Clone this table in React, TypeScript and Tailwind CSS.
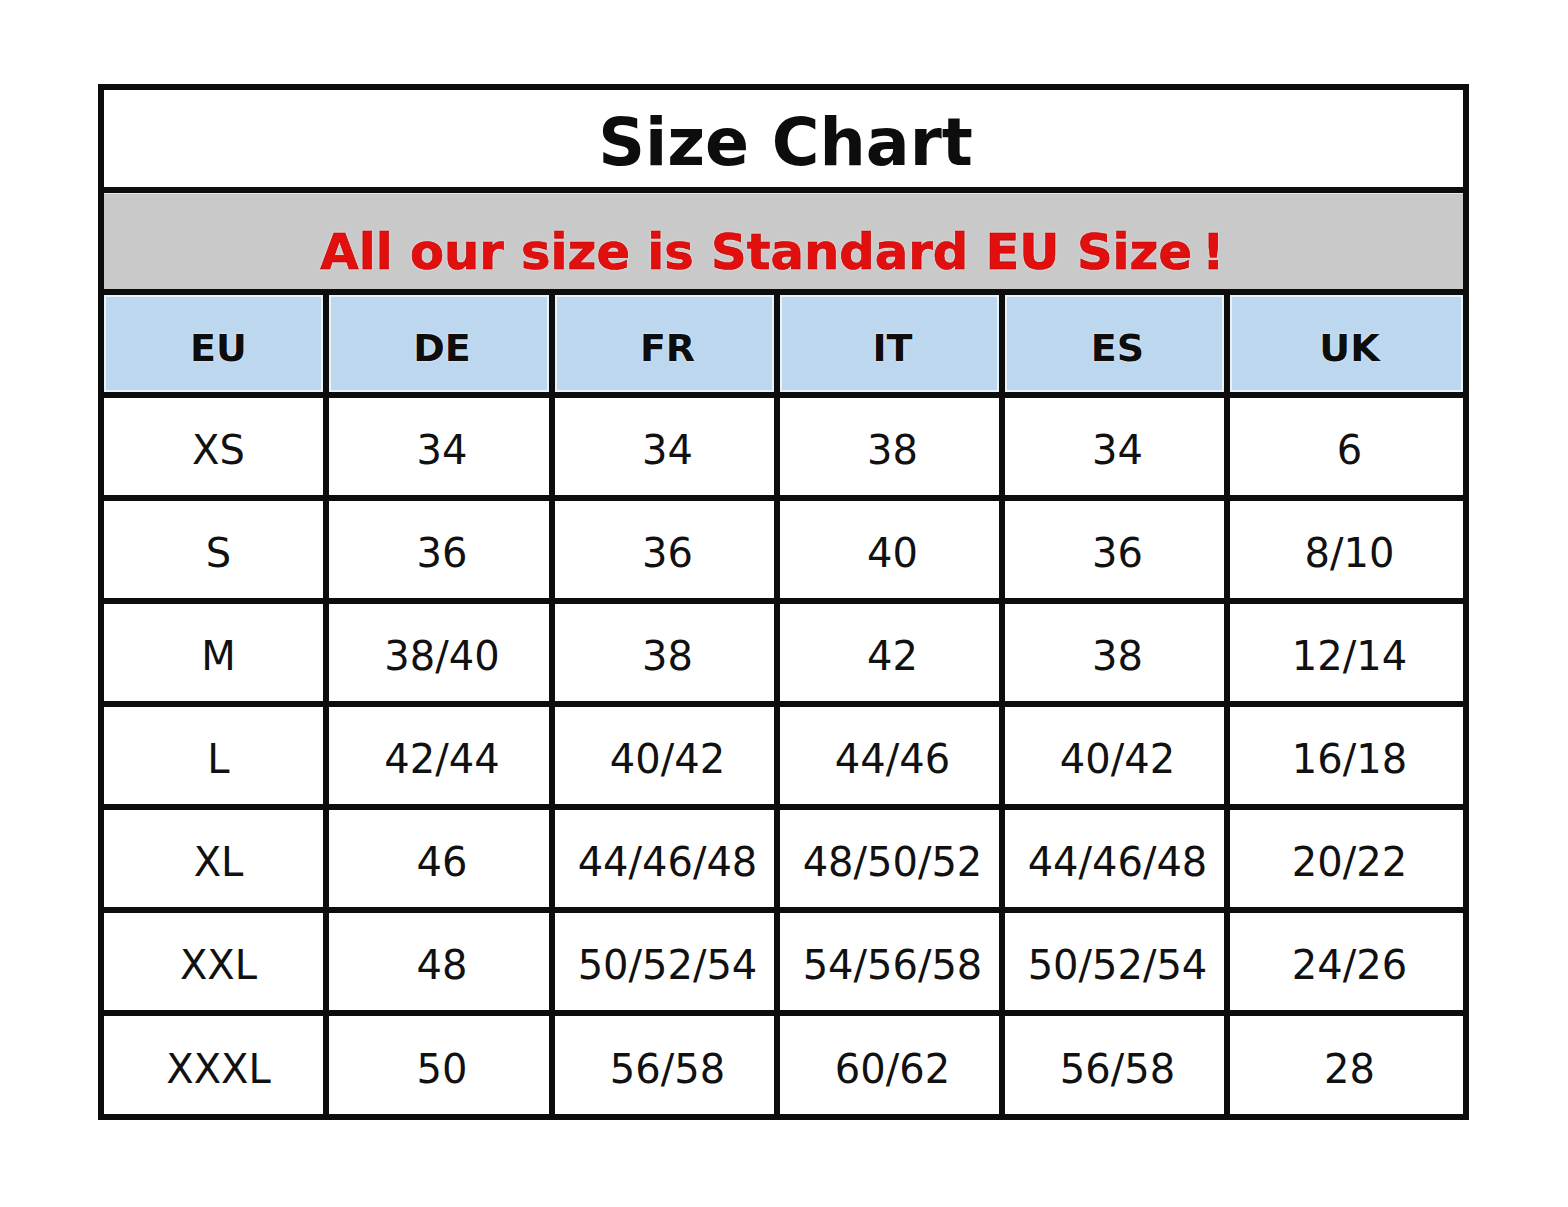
import React from 'react';

const headers = ['EU', 'DE', 'FR', 'IT', 'ES', 'UK'];

const rows: string[][] = [
  ['XS', '34', '34', '38', '34', '6'],
  ['S', '36', '36', '40', '36', '8/10'],
  ['M', '38/40', '38', '42', '38', '12/14'],
  ['L', '42/44', '40/42', '44/46', '40/42', '16/18'],
  ['XL', '46', '44/46/48', '48/50/52', '44/46/48', '20/22'],
  ['XXL', '48', '50/52/54', '54/56/58', '50/52/54', '24/26'],
  ['XXXL', '50', '56/58', '60/62', '56/58', '28'],
];

const cols = 'grid grid-cols-[225px_226px_225px_225px_225px_1fr]';

export default function App() {
  return (
    <div className="w-[1568px] h-[1207px] bg-white pt-[84px] pl-[98px] font-['DejaVu_Sans',Verdana,sans-serif]">
      <div className="w-[1371px] border-[6px] border-[#0d0d0d] bg-white">
        {/* Title */}
        <div className="h-[103px] border-b-[6px] border-[#0d0d0d] flex items-center justify-center pt-[8px]">
          <span className="text-[65px] font-bold text-[#0d0d0d] leading-none pl-[4px]">Size Chart</span>
        </div>

        {/* Notice */}
        <div className="h-[102px] border-b-[6px] border-[#0d0d0d] bg-[#c9c9c9] border-t border-t-[#e6e6e6] flex items-center justify-center pt-[22px] pr-[22px]">
          <span className="text-[49.6px] font-bold leading-none text-[#e1100e] [-webkit-text-stroke:0.6px_#b30000] [text-shadow:0_0_2px_#ffd6d6,0_0_3px_#ffd6d6]">
            All our size is Standard EU Size<span className="ml-[10px]">!</span>
          </span>
        </div>

        {/* Column headers */}
        <div className={`${cols} h-[103px] border-b-[6px] border-[#0d0d0d]`}>
          {headers.map((h, i) => (
            <div
              key={h}
              className={i < headers.length - 1 ? 'border-r-[6px] border-[#0d0d0d]' : ''}
            >
              <div
                className={`h-full flex items-center justify-center bg-[#bdd7ee] border-2 border-[#e9f2fa] pt-[8px] ${
                  i === 0 ? 'pl-[10px]' : 'pl-[6px]'
                }`}
              >
                <span className="text-[38px] font-bold text-[#0d0d0d] leading-none [text-shadow:0_0_2px_#fff]">
                  {h}
                </span>
              </div>
            </div>
          ))}
        </div>

        {/* Data */}
        {rows.map((row, r) => (
          <div
            key={r}
            className={`${cols} ${r < rows.length - 1 ? 'h-[103px] border-b-[6px] border-[#0d0d0d]' : 'h-[98px]'}`}
          >
            {row.map((v, i) => (
              <div
                key={i}
                className={`flex items-center justify-center pt-[7px] ${i === 0 ? 'pl-[10px]' : 'pl-[6px]'} ${
                  i < row.length - 1 ? 'border-r-[6px] border-[#0d0d0d]' : ''
                }`}
              >
                <span className="text-[40px] text-[#111] leading-none">{v}</span>
              </div>
            ))}
          </div>
        ))}
      </div>
    </div>
  );
}
